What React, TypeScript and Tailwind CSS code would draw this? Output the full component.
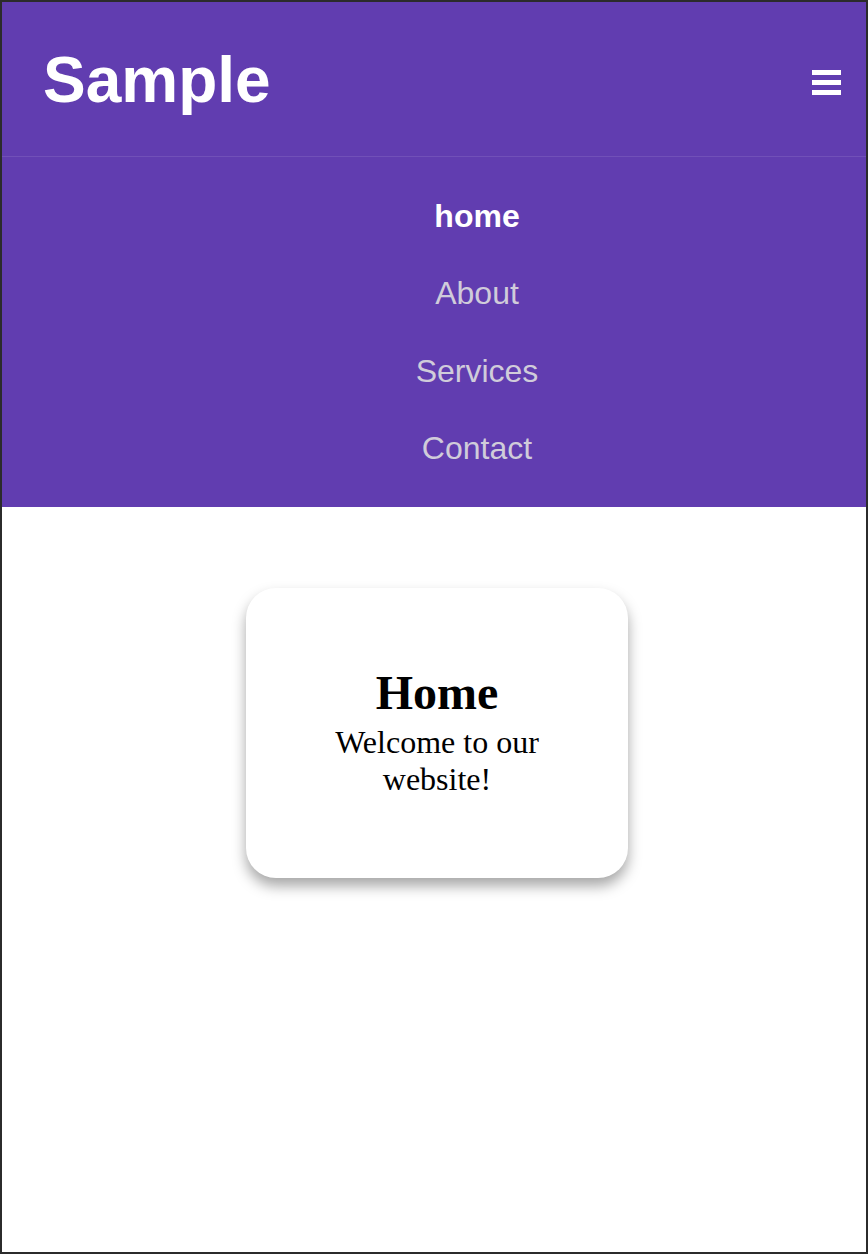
import React from "react";

const links = ["home", "About", "Services", "Contact"];

export default function App() {
  return (
    <div className="h-[1254px] w-full border-2 border-[#2b2b2b] bg-white overflow-hidden">
      {/* Header */}
      <header className="h-[155px] bg-[#613db0] border-b border-white/10 flex items-center justify-between pl-[41px] pr-[25px]">
        <h1
          className="text-white text-[64px] font-bold leading-none mt-[2px]"
          style={{ fontFamily: '"Liberation Sans", Arial, sans-serif' }}
        >
          Sample
        </h1>
        <button className="flex flex-col gap-[5px] w-[29px] mt-[6px]" aria-label="Toggle menu">
          <span className="block h-[5px] w-full bg-white" />
          <span className="block h-[5px] w-full bg-white" />
          <span className="block h-[5px] w-full bg-white" />
        </button>
      </header>

      {/* Nav */}
      <nav
        className="h-[350px] bg-[#613db0] flex flex-col pt-[20px] pb-[20px] pl-[86px]"
        style={{ fontFamily: '"Liberation Sans", Arial, sans-serif' }}
      >
        {links.map((link, i) => (
          <a
            key={link}
            className={
              "h-[77.5px] flex items-center justify-center text-[32px] " +
              (i === 0 ? "text-white font-bold" : "text-[#d0ccda]")
            }
          >
            {link}
          </a>
        ))}
      </nav>

      {/* Content */}
      <main className="flex justify-center pl-[6px] pt-[81px]">
        <div
          className="w-[382px] h-[290px] bg-white rounded-[30px] shadow-[0_8px_14px_rgba(0,0,0,0.35)] flex flex-col items-center justify-center px-[40px] text-center text-black pb-[2px]"
          style={{ fontFamily: '"Liberation Serif", "Times New Roman", serif' }}
        >
          <h2 className="text-[48px] font-bold leading-[53px]">Home</h2>
          <p className="text-[32px] leading-[37px] mt-[5px]">Welcome to our website!</p>
        </div>
      </main>
    </div>
  );
}
